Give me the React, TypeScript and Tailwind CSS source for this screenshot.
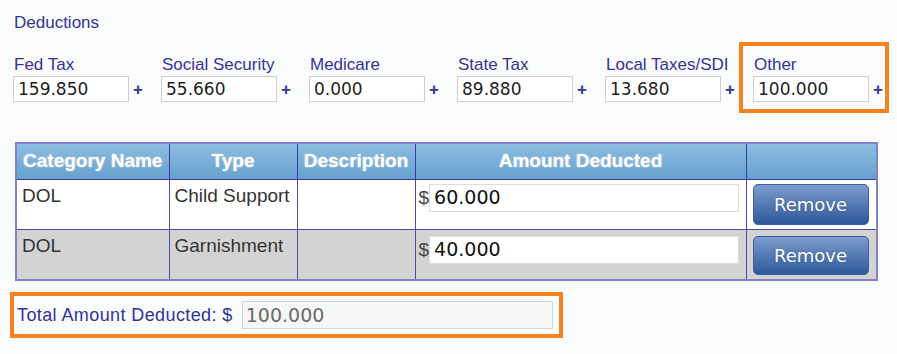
import React from 'react';

const taxes = [
  { label: 'Fed Tax', value: '159.850' },
  { label: 'Social Security', value: '55.660' },
  { label: 'Medicare', value: '0.000' },
  { label: 'State Tax', value: '89.880' },
  { label: 'Local Taxes/SDI', value: '13.680' },
  { label: 'Other', value: '100.000', highlight: true },
];

const rows = [
  { category: 'DOL', type: 'Child Support', description: '', amount: '60.000', shaded: false },
  { category: 'DOL', type: 'Garnishment', description: '', amount: '40.000', shaded: true },
];

function TaxField({ label, value, highlight }: { label: string; value: string; highlight?: boolean }) {
  return (
    <div className="relative w-[148px] shrink-0">
      {highlight && (
        <span className="pointer-events-none absolute -left-[14px] -top-[13px] w-[150px] h-[71px] border-4 border-[#f5821f]" />
      )}
      <div className="pl-[1px] text-[17px] leading-[20px] text-[#333399]">{label}</div>
      <div className="mt-[1px] flex items-center">
        <input
          readOnly
          value={value}
          className="h-[26px] w-[116px] border border-[#cfcfcf] bg-white px-[4px] font-['DejaVu_Sans',Verdana,sans-serif] text-[17px] text-[#1e1e1e] outline-none"
        />
        <span className="ml-[4px] mt-[1px] text-[17px] font-bold leading-none text-[#333399]">+</span>
      </div>
    </div>
  );
}

export default function App() {
  return (
    <div className="w-[897px] h-[354px] overflow-hidden bg-[#fafbfb] font-['Liberation_Sans',Arial,sans-serif]">
      <div className="pt-[13px] pl-[14px] text-[17px] leading-[20px] text-[#333399]">Deductions</div>

      <div className="mt-[22px] flex pl-[13px]">
        {taxes.map((t) => (
          <TaxField key={t.label} {...t} />
        ))}
      </div>

      <table className="ml-[15px] mt-[40px] w-[861px] table-fixed border-collapse border-2 border-[#8080cc]">
        <colgroup>
          <col className="w-[153px]" />
          <col className="w-[128px]" />
          <col className="w-[118px]" />
          <col className="w-[331px]" />
          <col className="w-[131px]" />
        </colgroup>
        <thead>
          <tr className="h-[36px] bg-gradient-to-b from-[#8dbde1] to-[#67a0ce]">
            {['Category Name', 'Type', 'Description', 'Amount Deducted', ''].map((h, i) => (
              <th
                key={i}
                className="border border-[#3a3aa4] p-0 text-center align-middle text-[19px] font-bold leading-[22px] text-white whitespace-nowrap [text-shadow:0_0_2px_rgba(255,255,255,0.6)]"
              >
                {h}
              </th>
            ))}
          </tr>
        </thead>
        <tbody>
          {rows.map((r, i) => (
            <tr key={i} className={r.shaded ? 'h-[51px] bg-[#d3d3d3]' : 'h-[50px] bg-white'}>
              <td className="border border-[#4a4aae] px-[5px] pt-[5px] align-top text-[19px] leading-[22px] text-[#333]">{r.category}</td>
              <td className="border border-[#4a4aae] px-[5px] pt-[5px] align-top text-[19px] leading-[22px] text-[#333]">{r.type}</td>
              <td className="border border-[#4a4aae] px-[5px] pt-[5px] align-top text-[19px] leading-[22px] text-[#333]">{r.description}</td>
              <td className={`border border-[#4a4aae] pl-[3px] align-top ${r.shaded ? 'pt-[6px]' : 'pt-[4px]'}`}>
                <div className="flex items-center">
                  <span className="text-[19px] leading-[22px] text-[#444]">$</span>
                  <input
                    readOnly
                    value={r.amount}
                    className="h-[28px] w-[310px] border border-[#dcdcdc] bg-white px-[4px] font-['DejaVu_Sans',Verdana,sans-serif] text-[19px] text-[#111] outline-none"
                  />
                </div>
              </td>
              <td className={`border border-[#4a4aae] pl-[6px] align-top ${r.shaded ? 'pt-[6px]' : 'pt-[4px]'}`}>
                <button
                  className={`w-[116px] ${r.shaded ? 'h-[39px]' : 'h-[41px]'} rounded-[5px] border border-[#3b5f9c] bg-gradient-to-b from-[#7d9dcd] to-[#2d589a] font-['DejaVu_Sans',Verdana,sans-serif] text-[18px] text-white [text-shadow:0_0_2px_rgba(0,0,0,0.25)]`}
                >
                  Remove
                </button>
              </td>
            </tr>
          ))}
        </tbody>
      </table>

      <div className="ml-[10px] mt-[11px] flex h-[46px] w-[553px] items-center border-4 border-[#f5821f] pl-[3px] pr-[6px]">
        <span className="text-[18px] leading-[20px] tracking-[0.4px] text-[#333399] whitespace-nowrap">Total Amount Deducted: $</span>
        <input
          readOnly
          value="100.000"
          className="ml-[9px] h-[28px] min-w-0 flex-1 border border-[#d6d6d6] bg-[#f6f7f7] px-[3px] font-['DejaVu_Sans',Verdana,sans-serif] text-[19px] text-[#6a6a6a] outline-none"
        />
      </div>
    </div>
  );
}
